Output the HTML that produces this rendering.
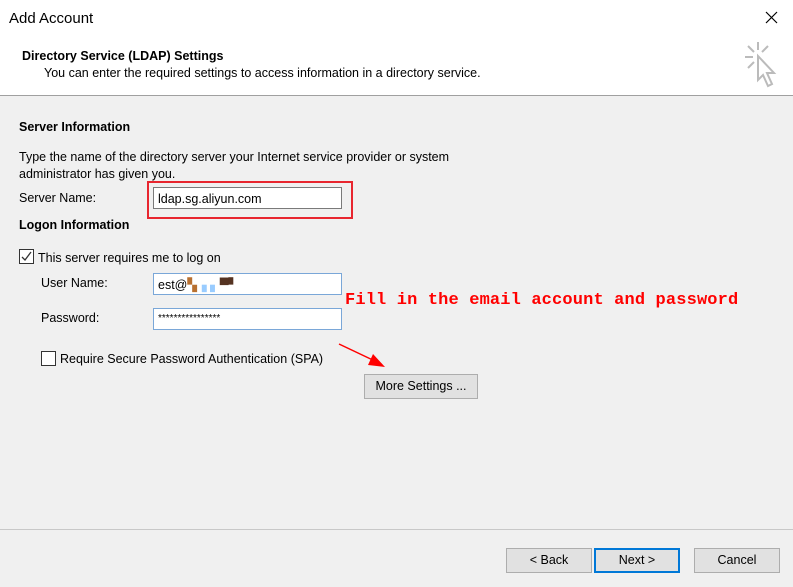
<!DOCTYPE html>
<html><head><meta charset="utf-8"><style>
body{margin:0;width:793px;height:587px;position:relative;overflow:hidden;background:#f0f0f0;font-family:"Liberation Sans",sans-serif;font-size:12.5px;color:#000}
.a{position:absolute;white-space:nowrap}
.top{position:absolute;left:0;top:0;width:793px;height:95px;background:#fff;border-bottom:1px solid #a0a0a0}
.in{position:absolute;background:#fff;border:1px solid #7a7a7a;height:22px;box-sizing:border-box;padding-left:4px;line-height:20px}
.btn{position:absolute;background:#e1e1e1;border:1px solid #adadad;box-sizing:border-box;text-align:center;line-height:23px;height:25px}
.cb{position:absolute;width:15px;height:15px;border:1px solid #333;background:#fff;box-sizing:border-box}
</style></head><body>
<div class="top"></div>
<div class="a" style="left:9px;top:10px;font-size:15px">Add Account</div>
<svg class="a" style="left:765px;top:11px" width="13" height="13"><path d="M1 1 L12 12 M12 1 L1 12" stroke="#000" stroke-width="1.2"/></svg>
<svg class="a" style="left:744px;top:40px" width="40" height="52" viewBox="0 0 40 52"><g stroke="#bbb" stroke-width="2" fill="none"><line x1="14" y1="2" x2="14" y2="10"/><line x1="4" y1="6" x2="10" y2="12"/><line x1="24" y1="6" x2="18" y2="12"/><line x1="1" y1="17" x2="9" y2="17"/><line x1="4" y1="28" x2="10" y2="22"/><path d="M14 16 L14 40 L19 35 L24 46 L28 44 L23 33 L30 33 Z" fill="#fff"/></g></svg>
<div class="a" style="left:22px;top:49px;font-weight:bold">Directory Service (LDAP) Settings</div>
<div class="a" style="left:44px;top:66px">You can enter the required settings to access information in a directory service.</div>
<div class="a" style="left:19px;top:120px;font-weight:bold">Server Information</div>
<div class="a" style="left:19px;top:149px;line-height:17px">Type the name of the directory server your Internet service provider or system<br>administrator has given you.</div>
<div class="a" style="left:19px;top:191px">Server Name:</div>
<div class="a" style="left:147px;top:181px;width:206px;height:38px;border:2px solid #e8262f;box-sizing:border-box"></div>
<div class="in" style="left:153px;top:187px;width:189px;line-height:22px">ldap.sg.aliyun.com</div>
<div class="a" style="left:19px;top:218px;font-weight:bold">Logon Information</div>
<div class="cb" style="left:19px;top:249px"><svg width="13" height="13" style="position:absolute;left:0;top:0"><path d="M2 7 L5 10 L11 2" stroke="#333" stroke-width="1.3" fill="none"/></svg></div>
<div class="a" style="left:38px;top:251px">This server requires me to log on</div>
<div class="a" style="left:41px;top:276px">User Name:</div>
<div class="in" style="left:153px;top:273px;width:189px;border-color:#7aa7d8;line-height:22px">est@<span style="color:#b87030">▚</span><span style="color:#9cf">▗ ▖</span><span style="color:#532">▀▘</span></div>
<div class="a" style="left:41px;top:311px">Password:</div>
<div class="in" style="left:153px;top:308px;width:189px;border-color:#7aa7d8;font-size:10px">****************</div>
<div class="a" style="left:345px;top:291px;font-family:'Liberation Mono',monospace;font-weight:bold;color:#f00;font-size:17px;letter-spacing:0.15px">Fill in the email account and password</div>
<div class="cb" style="left:41px;top:351px"></div>
<div class="a" style="left:60px;top:352px">Require Secure Password Authentication (SPA)</div>
<svg class="a" style="left:335px;top:340px" width="55" height="30"><line x1="4" y1="4" x2="42" y2="22" stroke="#f00" stroke-width="1.5"/><path d="M38 14 L50 27 L33 25 Z" fill="#f00"/></svg>
<div class="btn" style="left:364px;top:374px;width:114px">More Settings ...</div>
<div class="a" style="left:0;top:529px;width:793px;height:1px;background:#c8c8c8"></div>
<div class="btn" style="left:506px;top:548px;width:86px">&lt; Back</div>
<div class="btn" style="left:594px;top:548px;width:86px;border:2px solid #0078d7;line-height:21px">Next &gt;</div>
<div class="btn" style="left:694px;top:548px;width:86px">Cancel</div>
</body></html>
